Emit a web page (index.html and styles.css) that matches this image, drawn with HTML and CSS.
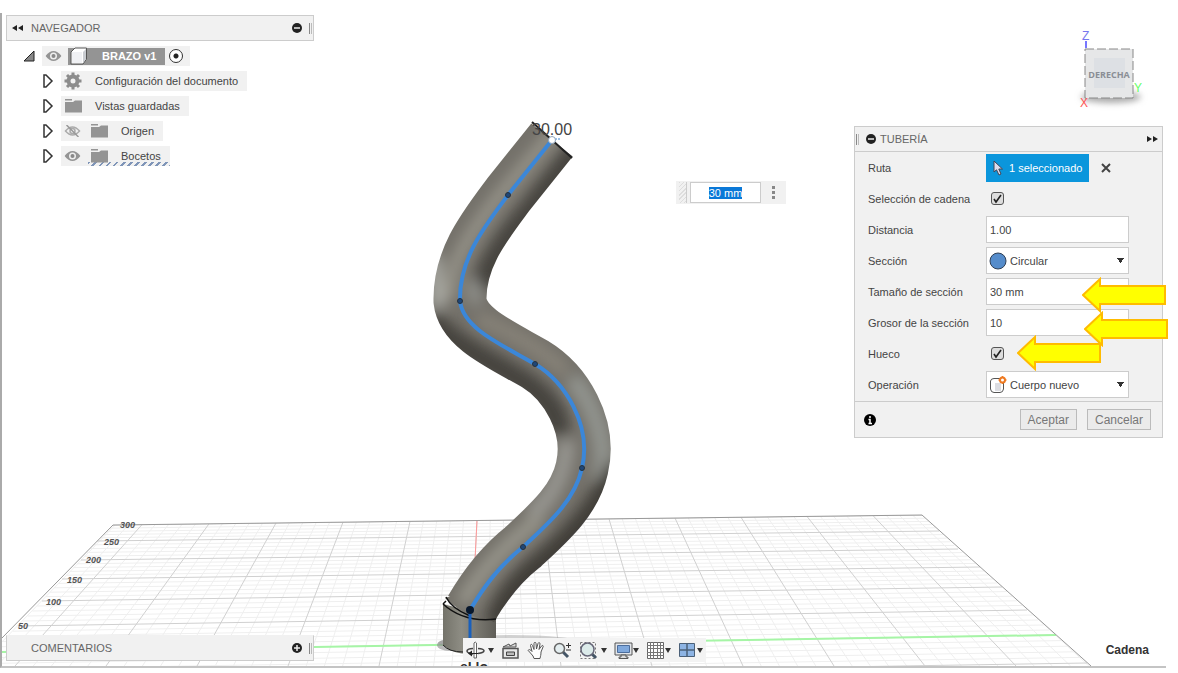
FILE: index.html
```html
<!DOCTYPE html>
<html lang="es">
<head>
  <meta charset="UTF-8">
  <meta name="viewport" content="width=device-width, initial-scale=1.0">
  <title>BRAZO v1</title>
  <link rel="stylesheet" href="styles.css">
</head>
<body>

<svg class="scene" viewBox="0 0 1178 673" preserveAspectRatio="xMidYMid slice" aria-hidden="true">
  <defs>
    <clipPath id="floor-clip"><path d="M113 525 L922 515 L1091 666 L2 666 L2 638 Z"/></clipPath>
    <clipPath id="view-clip"><path d="M2 13 H1166 V666 H2 Z"/></clipPath>
    <mask id="tube-mask" maskUnits="userSpaceOnUse" x="400" y="100" width="240" height="570">
      <path d="M552 140 L508 195 C485 226 459 258 460 301 C463 328 500 344 535 364 C565 382 592 425 582 468 C575 500 550 522 523 547 C500 565 485 585 471 609" fill="none" stroke="#fff" stroke-width="53"/>
      <path d="M445 598 L470 590 L500 600 L496 620 Q468 620 445 598 Z" fill="#fff"/>
    </mask>
    <filter id="soft" filterUnits="userSpaceOnUse" x="380" y="80" width="280" height="600"><feGaussianBlur stdDeviation="7"/></filter>
    <linearGradient id="base-fill" x1="0" x2="1" y1="0" y2="0">
      <stop offset="0" stop-color="#74736a"/>
      <stop offset="0.35" stop-color="#8e8d84"/>
      <stop offset="1" stop-color="#5f5d57"/>
    </linearGradient>
  </defs>

  <!-- suelo -->
  <g clip-path="url(#floor-clip)">
    <g id="floor-grid"></g>
    <path d="M477 520 L471 640" stroke="#f99" fill="none"/>
    <path d="M0 652 L1056 635" stroke="#a6f5a6" stroke-width="2" fill="none"/>
  </g>
  <path d="M2 638 L113 525 L922 515 L1091 666" fill="none" stroke="#999" stroke-width="1"/>
  <g class="floor-text">
    <text x="120" y="528">300</text>
    <text x="104" y="545">250</text>
    <text x="86" y="563">200</text>
    <text x="67" y="583">150</text>
    <text x="46" y="605">100</text>
    <text x="18" y="629">50</text>
  </g>

  <!-- base -->
  <ellipse cx="510" cy="643" rx="72" ry="8" fill="#999" opacity="0.45"/>
  <ellipse cx="450" cy="645" rx="13" ry="6" fill="#888" opacity="0.6"/>
  <path d="M443 604 L443 645 Q452 654 470 654 L496 650 L496 618 Z" fill="url(#base-fill)"/>
  <path d="M443 645 Q449 652 463 652" fill="none" stroke="#222"/>

  <!-- tubería -->
  <g mask="url(#tube-mask)">
    <rect x="400" y="100" width="240" height="570" fill="#74716a"/>
    <g filter="url(#soft)" fill="none">
      <path d="M582 145 L530 212 C506 240 488 268 484 288" stroke="#45433d" stroke-width="24"/>
      <path d="M556 130 L500 195 C476 226 448 262 449 300" stroke="#98958b" stroke-width="12"/>
      <path d="M434 255 L438 308" stroke="#aaaba5" stroke-width="13"/>
      <path d="M472 280 L476 304" stroke="#92938e" stroke-width="12"/>
      <path d="M428 318 C456 350 500 366 528 386 C552 404 560 420 556 434" stroke="#45433d" stroke-width="24"/>
      <path d="M478 318 C512 332 546 352 566 372" stroke="#8a857a" stroke-width="12"/>
      <path d="M572 378 C602 416 607 455 600 480" stroke="#92948f" stroke-width="18"/>
      <path d="M567 440 C566 475 548 502 530 516" stroke="#989792" stroke-width="16"/>
      <path d="M620 466 C594 520 558 550 538 567 C518 584 503 602 496 626" stroke="#403e37" stroke-width="25"/>
      <path d="M540 518 C508 543 480 570 462 604" stroke="#98968c" stroke-width="14"/>
    </g>
  </g>
  <path d="M532 122 L572 158" stroke="#222" stroke-width="2"/>
  <path d="M446 597 Q451 608 470 616 M443 604 Q464 623 496 619 M443 604 L446 601" fill="none" stroke="#111" stroke-width="1.5"/>
  <text class="dim-text" x="532" y="135">30.00</text>
  <path d="M552 140 L508 195 C485 226 459 258 460 301 C463 328 500 344 535 364 C565 382 592 425 582 468 C575 500 550 522 523 547 C500 565 485 585 470 610" fill="none" stroke="#3b87d9" stroke-width="4"/>
  <path d="M470 610 V640" stroke="#1960bd" stroke-width="3"/>
  <g fill="#1f4778" stroke="#26313d">
    <circle cx="508" cy="195" r="2.5"/>
    <circle cx="460" cy="301" r="2.5"/>
    <circle cx="535" cy="364" r="2.5"/>
    <circle cx="582" cy="468" r="2.5"/>
    <circle cx="523" cy="547" r="2.5"/>
  </g>
  <circle cx="470" cy="610" r="4" fill="#07172c"/>
  <path d="M555 139 H561" stroke="#3b87d9" stroke-dasharray="2 1"/>
  <circle cx="552" cy="140" r="3.5" fill="#fff" stroke="#8fa3b8"/>
  <g clip-path="url(#view-clip)"><text class="cut-text" x="460" y="672">el lo</text></g>
</svg>

<main class="viewport">

  <aside class="left">
    <section class="panel-bar">
      <button class="plain" aria-label="Contraer"><svg width="11" height="8" viewBox="0 0 11 8"><path d="M5 1 V7 L0 4 Z M11 1 V7 L6 4 Z" fill="#222"/></svg></button>
      <h2>NAVEGADOR</h2>
      <button class="plain" aria-label="Ocultar"><svg width="10" height="10" viewBox="0 0 10 10"><circle cx="5" cy="5" r="5" fill="#222"/><path d="M2 5 H8" stroke="#eee" stroke-width="1.5"/></svg></button>
      <span class="grip"></span>
    </section>

    <ul class="tree">
      <li class="root">
        <button class="plain toggle" aria-label="Contraer BRAZO v1"><svg width="12" height="12" viewBox="0 0 12 12"><path d="M11 1 V11 H1 Z" fill="#888" stroke="#222"/></svg></button>
        <div class="node">
          <svg class="eye" viewBox="0 0 16 12"><use href="#eye"/></svg>
          <span class="active">
            <svg width="18" height="18" viewBox="0 0 18 18"><path d="M1 5 L5 1 H16.5 V12 L13 17 H1 Z" fill="#fff" stroke="#555"/><path d="M13 5 L16 2 V12 L13 16 Z" fill="#c9ccd1"/><path d="M2 5 H12 V16 H2 Z" fill="#f0f1f4"/></svg>
            <b>BRAZO v1</b>
          </span>
          <input type="radio" checked aria-label="Activar BRAZO v1">
        </div>
      </li>
      <li>
        <button class="plain toggle" aria-label="Expandir"><svg width="12" height="14" viewBox="0 0 12 14"><use href="#tri"/></svg></button>
        <div class="node">
          <svg class="icon" viewBox="0 0 18 18"><circle cx="9" cy="9" r="4.5" fill="none" stroke="#8c8c8c" stroke-width="4"/><path d="M9 0.5 V4 M9 14 V17.5 M0.5 9 H4 M14 9 H17.5 M3 3 L5.5 5.5 M12.5 12.5 L15 15 M15 3 L12.5 5.5 M5.5 12.5 L3 15" stroke="#8c8c8c" stroke-width="3"/></svg>
          <span class="name">Configuración del documento</span>
        </div>
      </li>
      <li>
        <button class="plain toggle" aria-label="Expandir"><svg width="12" height="14" viewBox="0 0 12 14"><use href="#tri"/></svg></button>
        <div class="node">
          <svg class="icon" viewBox="0 0 18 18"><use href="#folder"/></svg>
          <span class="name">Vistas guardadas</span>
        </div>
      </li>
      <li>
        <button class="plain toggle" aria-label="Expandir"><svg width="12" height="14" viewBox="0 0 12 14"><use href="#tri"/></svg></button>
        <div class="node">
          <svg class="eye" viewBox="0 0 16 12"><path d="M1 6 Q8 -2 15 6 Q8 14 1 6 Z" fill="none" stroke="#aaa" stroke-width="1.5"/><circle cx="8" cy="6" r="2.5" fill="none" stroke="#aaa" stroke-width="1.5"/><path d="M2 0 L14 12" stroke="#999" stroke-width="1.5"/></svg>
          <svg class="icon second" viewBox="0 0 18 18"><use href="#folder"/></svg>
          <span class="name">Origen</span>
        </div>
      </li>
      <li>
        <button class="plain toggle" aria-label="Expandir"><svg width="12" height="14" viewBox="0 0 12 14"><use href="#tri"/></svg></button>
        <div class="node">
          <svg class="eye" viewBox="0 0 16 12"><use href="#eye"/></svg>
          <span class="hatched">
            <svg class="icon" viewBox="0 0 18 18"><use href="#folder"/></svg>
            <span class="name">Bocetos</span>
          </span>
        </div>
      </li>
    </ul>

    <section class="panel-bar comments">
      <h2>COMENTARIOS</h2>
      <button class="plain" aria-label="Mostrar"><svg width="10" height="10" viewBox="0 0 10 10"><circle cx="5" cy="5" r="5" fill="#222"/><path d="M2 5 H8 M5 2 V8" stroke="#eee" stroke-width="1.5"/></svg></button>
      <span class="grip"></span>
    </section>
  </aside>

  <nav class="toolbar" aria-label="Navegación">
    <div class="tool spaced">
      <button class="plain" aria-label="Órbita"><svg width="19" height="19" viewBox="0 0 19 19"><path d="M8 2 V17 H10.5 V2 L9.2 1 Z" fill="#fff" stroke="#666"/><path d="M7 13 C-1 12 -1 8 7 7.5 M12 7.5 C20 8 20 11.5 12 12.5" fill="none" stroke="#444" stroke-width="1.5"/><path d="M3 12.5 H12" stroke="#222"/><path d="M6 9.5 L2 12.5 L6 15.5 Z" fill="#222"/></svg></button>
      <button class="plain caret" aria-label="Más opciones de órbita"></button>
    </div>
    <button class="plain" aria-label="Mirar a"><svg width="19" height="19" viewBox="0 0 19 19"><path d="M2 7.5 H17 V17 H2 Z" fill="#e8e8e8" stroke="#555" stroke-width="1.5"/><path d="M5.5 11 H13.5 V14.5 H5.5 Z" fill="#bbb" stroke="#444"/><path d="M2 6 L8 3 L9 5 L15 2 L15 6 Z" fill="#ddd" stroke="#555"/></svg></button>
    <button class="plain" aria-label="Encuadre"><svg width="19" height="19" viewBox="0 0 19 19"><path d="M7 17.5 L6 15 C4 13 3 11 1.2 9.5 C1.5 8 3.5 8.5 5 10.5 L3.5 4.5 C3.5 3 5 3 5.5 4.5 L7 8.5 L7 2.5 C7 1 9 1 9 2.5 L9.5 8 L11 2.5 C11.5 1 13.2 1.5 13 3 L12 8.5 L14.5 5 C15.5 3.8 16.8 4.8 16 6 L14 11 C14 14 13.5 15 13 17.5 Z" fill="#fff" stroke="#555"/></svg></button>
    <button class="plain" aria-label="Zoom"><svg width="19" height="19" viewBox="0 0 19 19"><path d="M9.5 10.5 L15 16" stroke="#456" stroke-width="3"/><circle cx="6.5" cy="7.5" r="5" fill="#e4eef0" stroke="#666" stroke-width="1.5"/><path d="M13 4.5 H18 M15.5 2 V7 M13 9 H18" stroke="#333"/></svg></button>
    <div class="tool spaced">
      <button class="plain" aria-label="Ventana de zoom"><svg width="19" height="19" viewBox="0 0 19 19"><path d="M1.5 1.5 H16.5 V17.5 H1.5 Z" fill="none" stroke="#777" stroke-dasharray="2 2"/><path d="M12 12 L17 17" stroke="#456" stroke-width="3"/><circle cx="8.5" cy="8.5" r="6.5" fill="#dcebea" stroke="#667" stroke-width="1.5"/></svg></button>
      <button class="plain caret" aria-label="Más opciones de zoom"></button>
    </div>
    <div class="tool">
      <button class="plain" aria-label="Visualización"><svg width="19" height="19" viewBox="0 0 19 19"><path d="M1 2 H18 V14 H1 Z" fill="#e3e6ea" stroke="#555"/><path d="M3.5 4.5 H15.5 V11.5 H3.5 Z" fill="#7fa8dc" stroke="#4c6d9c"/><path d="M7 14 H12 V16 H14 V17.5 H5 V16 H7 Z" fill="#ddd" stroke="#555"/></svg></button>
      <button class="plain caret" aria-label="Más opciones de visualización"></button>
    </div>
    <div class="tool">
      <button class="plain" aria-label="Rejilla"><svg width="19" height="19" viewBox="0 0 19 19"><path d="M1.5 1.5 H17.5 V17.5 H1.5 Z" fill="#fff" stroke="#666"/><path d="M4.5 1 V18 M7.5 1 V18 M11.5 1 V18 M14.5 1 V18 M1 4.5 H18 M1 7.5 H18 M1 11.5 H18 M1 14.5 H18" stroke="#777"/></svg></button>
      <button class="plain caret" aria-label="Más opciones de rejilla"></button>
    </div>
    <div class="tool">
      <button class="plain" aria-label="Ventanas gráficas"><svg width="19" height="19" viewBox="0 0 19 19"><path d="M1.5 2.5 H9 V9 H1.5 Z M9 2.5 H16.500 V9 H9 Z M1.5 9 H9 V15.500 H1.5 Z M9 9 H16.500 V15.500 H9 Z" fill="#8db4e4" stroke="#4b6078"/></svg></button>
      <button class="plain caret" aria-label="Más ventanas gráficas"></button>
    </div>
  </nav>

  <aside class="right">
    <svg class="cube" width="80" height="84" viewBox="0 0 80 84">
      <defs><filter id="cube-shadow" x="-20%" y="-100%" width="140%" height="300%"><feGaussianBlur stdDeviation="3"/></filter></defs>
      <ellipse cx="41" cy="69" rx="30" ry="6" fill="#aaa" filter="url(#cube-shadow)"/>
      <path d="M15 21 H63 V70 H15 Z" fill="#e6e7e8"/>
      <path d="M24 30 H55 V60 H24 Z" fill="#dde0e4"/>
      <path d="M15 21 H63 V70 H15 Z" fill="none" stroke="#888" stroke-dasharray="9 3"/>
      <path d="M16 13 V20" stroke="#77f" stroke-width="2"/>
      <text class="axis" x="12" y="12" fill="#77e">Z</text>
      <text class="axis" x="64" y="64" fill="#6f6">Y</text>
      <text class="axis" x="10" y="79" fill="#f55">X</text>
      <text class="face" x="39" y="50" text-anchor="middle">DERECHA</text>
    </svg>

    <form class="dialog">
      <header>
        <span class="grip"></span>
        <button type="button" class="plain" aria-label="Contraer"><svg width="10" height="10" viewBox="0 0 10 10"><circle cx="5" cy="5" r="5" fill="#222"/><path d="M2 5 H8" stroke="#eee" stroke-width="1.5"/></svg></button>
        <h2>TUBERÍA</h2>
        <button type="button" class="plain" aria-label="Acoplar"><svg width="11" height="8" viewBox="0 0 11 8"><path d="M0 1 V7 L5 4 Z M6 1 V7 L11 4 Z" fill="#222"/></svg></button>
      </header>
      <div class="fields">
        <div class="row">
          <label for="ruta">Ruta</label>
          <div class="control">
            <button type="button" class="pick" id="ruta"><svg width="11" height="16" viewBox="0 0 11 16"><path d="M1 1 V12 L3.5 9.8 L6 15 L8 14 L5.8 9 H9.5 Z" fill="#dde" stroke="#445"/></svg>1 seleccionado</button>
            <button type="button" class="plain" aria-label="Borrar selección"><svg width="10" height="10" viewBox="0 0 10 10"><path d="M1 1 L9 9 M9 1 L1 9" stroke="#444" stroke-width="2"/></svg></button>
          </div>
        </div>
        <div class="row">
          <label for="cadena">Selección de cadena</label>
          <div class="control"><input type="checkbox" id="cadena" checked></div>
        </div>
        <div class="row">
          <label for="distancia">Distancia</label>
          <div class="control"><input type="text" id="distancia" value="1.00"></div>
        </div>
        <div class="row">
          <label for="seccion">Sección</label>
          <div class="control">
            <select id="seccion"><option>Circular</option></select>
            <svg class="lead" width="18" height="18" viewBox="0 0 18 18"><circle cx="9" cy="9" r="8" fill="#558ccb" stroke="#2f3f55"/></svg>
          </div>
        </div>
        <div class="row">
          <label for="tamano">Tamaño de sección</label>
          <div class="control">
            <input type="text" id="tamano" value="30 mm">
            <svg class="arrow size" viewBox="0 0 84 36"><use href="#arrow"/></svg>
          </div>
        </div>
        <div class="row">
          <label for="grosor">Grosor de la sección</label>
          <div class="control">
            <input type="text" id="grosor" value="10">
            <svg class="arrow thick" viewBox="0 0 84 36"><use href="#arrow"/></svg>
          </div>
        </div>
        <div class="row">
          <label for="hueco">Hueco</label>
          <div class="control">
            <input type="checkbox" id="hueco" checked>
            <svg class="arrow hollow" viewBox="0 0 84 36"><use href="#arrow"/></svg>
          </div>
        </div>
        <div class="row">
          <label for="operacion">Operación</label>
          <div class="control">
            <select id="operacion"><option>Cuerpo nuevo</option></select>
            <svg class="lead" width="18" height="18" viewBox="0 0 18 18"><path d="M1.5 5 Q2 2.5 5 2.5 H11 Q14 3 14.5 6 V13 Q14 16.5 11 16.5 H5 Q2 16.5 1.5 13 Z" fill="#fff" stroke="#555"/><path d="M6 7 H12 V15 H6 Z" fill="#dcdde2"/><circle cx="13.5" cy="4" r="2.5" fill="#fff" stroke="#ee7a22" stroke-width="2"/><path d="M13.5 0 V1.5 M13.5 6.5 V8 M9.5 4 H11 M16 4 H17.5" stroke="#ee7a22" stroke-width="1.5"/></svg>
          </div>
        </div>
      </div>
      <footer>
        <svg class="info" width="12" height="12" viewBox="0 0 12 12"><circle cx="6" cy="6" r="6" fill="#000"/><path d="M6 2 V4 M4.5 5.5 H6 V9.5 M4.5 9.5 H8" stroke="#fff" stroke-width="1.5" fill="none"/></svg>
        <button type="button" class="btn">Aceptar</button>
        <button type="button" class="btn">Cancelar</button>
      </footer>
    </form>

    <p class="status">Cadena</p>
  </aside>

  <div class="hud">
    <span class="hud-grip"></span>
    <input type="text" id="hud-size" value="30 mm" aria-label="Tamaño de sección">
    <button class="plain" aria-label="Más"><svg width="4" height="14" viewBox="0 0 4 14"><path d="M0 0 H3 V3 H0 Z M0 5 H3 V8 H0 Z M0 10 H3 V13 H0 Z" fill="#888"/></svg></button>
  </div>
</main>

<svg class="symbols" aria-hidden="true">
  <symbol id="eye" viewBox="0 0 16 12"><path d="M0 6 Q8 -4 16 6 Q8 16 0 6 Z" fill="#949494"/><circle cx="8" cy="6" r="3.5" fill="#eee"/><circle cx="8" cy="6" r="2" fill="#888"/></symbol>
  <symbol id="folder" viewBox="0 0 18 18"><path d="M1 2 H8 V3.5 H1 Z M1 5 H9 L11 3.5 H18 V15.5 H1 Z" fill="#949494"/></symbol>
  <symbol id="tri" viewBox="0 0 12 14"><path d="M2 1 H4 L10 7 L4 13 H2 Z" fill="#fff" stroke="#333" stroke-width="1.5"/></symbol>
  <symbol id="arrow" viewBox="0 0 84 36"><path d="M1 18 L18 2 V9 H83 V27 H18 V34 Z" fill="#ff0" stroke="#fb0" stroke-width="2"/></symbol>
</svg>

<script src="script.js"></script>
</body>
</html>
```

FILE: styles.css
```css
* {
  box-sizing: border-box;
}

body {
  margin: 0;
  padding: 13px 12px 5px 0;
  height: 100vh;
  overflow: hidden;
  position: relative;
  background-color: white;
  color: #444;
  font-family: "Liberation Sans", Arial, sans-serif;
  font-size: 11px;
}

h2 {
  margin: 0;
  font-size: 11px;
  font-weight: normal;
  color: #666;
}

input,
select,
button {
  font-family: inherit;
  font-size: 11px;
  color: #444;
}

.plain {
  display: flex;
  padding: 0;
  border: none;
  background: none;
}

.symbols {
  display: none;
}

/* escena 3D de fondo */
.scene {
  position: absolute;
  inset: 0;
  width: 100%;
  height: 100%;
}

.grid-minor {
  stroke: #efefef;
}

.grid-major {
  stroke: #d0d0d0;
}

.floor-text {
  font-size: 9px;
  font-style: italic;
  font-weight: bold;
  fill: #555;
}

.dim-text {
  font-size: 16px;
  fill: #444;
}

.cut-text {
  font-size: 14px;
  font-weight: bold;
  fill: #333;
}

.viewport {
  position: relative;
  display: flex;
  justify-content: space-between;
  height: 100%;
  border-left: 2px solid #aaa;
  border-bottom: 2px solid #c4c4c4;
}

.left,
.right {
  flex: 1;
  display: flex;
  flex-direction: column;
}

/* navegador */
.left {
  align-items: flex-start;
  padding: 2px 0 5px 4px;
}

.panel-bar {
  display: flex;
  align-items: center;
  width: 308px;
  height: 26px;
  padding: 0 1px 0 5px;
  background-color: #f1f1f1;
  border: 1px solid #ccc;
}

.panel-bar h2 {
  flex: 1;
  margin-left: 8px;
}

.panel-bar .grip {
  margin-left: 7px;
}

.comments {
  margin-top: auto;
  border-top-color: #f1f1f1;
}

.comments h2 {
  margin-left: 19px;
}

.grip {
  width: 3px;
  height: 11px;
  border-left: 1px solid #888;
  border-right: 1px solid #bbb;
}

.tree {
  list-style: none;
  margin: 5px 0 0;
  padding: 0 0 0 36px;
  display: flex;
  flex-direction: column;
  gap: 5px;
}

.tree li {
  display: flex;
  align-items: center;
}

.tree .root {
  margin-left: -19px;
}

.toggle {
  width: 19px;
}

.node {
  display: flex;
  align-items: center;
  height: 20px;
  padding: 0 9px 0 3px;
  background-color: #f1f1f1;
}

.root .node {
  padding-right: 7px;
}

.eye {
  width: 17px;
  height: 12px;
}

.icon {
  width: 18px;
  height: 18px;
}

.name {
  margin-left: 13px;
}

.second {
  margin-left: 9px;
}

.active {
  display: flex;
  align-items: center;
  gap: 14px;
  height: 17px;
  margin: 0 4px 0 6px;
  padding: 0 9px 0 2px;
  background-color: #949494;
  color: white;
}

.hatched {
  display: flex;
  align-items: center;
  height: 20px;
  margin: 0 -9px 0 7px;
  padding: 0 9px 0 2px;
  background: repeating-linear-gradient(135deg, #7f95b8 0 2px, transparent 2px 5px) bottom / 100% 4px no-repeat;
}

input[type="radio"] {
  appearance: none;
  width: 14px;
  height: 14px;
  margin: 0;
  border: 1px solid #333;
  border-radius: 50%;
  background: radial-gradient(circle, #222 0 2px, white 3px);
}

/* barra inferior */
.toolbar {
  align-self: flex-end;
  display: flex;
  align-items: center;
  gap: 7px;
  height: 24px;
  margin-bottom: 4px;
  padding: 0 3px;
  background-color: #f3f3f3;
}

.tool {
  display: flex;
  align-items: center;
}

.spaced {
  gap: 3px;
}

.caret {
  border-left: 3px solid transparent;
  border-right: 3px solid transparent;
  border-top: 5px solid #333;
}

/* cubo, diálogo y estado */
.right {
  align-items: flex-end;
  padding: 15px 3px 9px 0;
}

.cube {
  margin-right: 13px;
}

.axis {
  font-size: 12px;
}

.face {
  font-family: "Open Sans", sans-serif;
  font-size: 9px;
  font-weight: bold;
  fill: #8a8e95;
}

.dialog {
  width: 309px;
  margin-top: 14px;
  background-color: #f1f1f1;
  border: 1px solid #ccc;
}

.dialog header {
  display: flex;
  align-items: center;
  height: 25px;
  padding: 0 4px 0 1px;
  border-bottom: 1px solid #ccc;
}

.dialog header .grip {
  margin-right: 7px;
}

.dialog h2 {
  flex: 1;
  margin-left: 4px;
}

.fields {
  padding: 0 0 1px 13px;
}

.row {
  display: flex;
  align-items: center;
  height: 31px;
}

.row label {
  width: 118px;
}

.control {
  position: relative;
  display: flex;
  align-items: center;
  width: 143px;
}

.control input[type="text"],
select {
  width: 100%;
  height: 27px;
  padding: 0 3px;
  border: 1px solid #ccc;
  border-radius: 0;
  background-color: white;
}

.control select {
  appearance: none;
  padding-left: 23px;
  background: conic-gradient(from 325deg at 50% 100%, #333 70deg, transparent 70deg) right 4px center / 7px 5px no-repeat white;
}

.lead {
  position: absolute;
  left: 3px;
}

input[type="checkbox"] {
  appearance: none;
  width: 13px;
  height: 13px;
  margin: 0 0 0 5px;
  border: 1px solid #555;
  border-radius: 3px;
  background: url("data:image/svg+xml,%3Csvg xmlns='http://www.w3.org/2000/svg' viewBox='0 0 11 11'%3E%3Cpath d='M2 6 L4 9 L9 2' fill='none' stroke='%23222' stroke-width='1.6'/%3E%3C/svg%3E") #ddd;
}

.pick {
  display: flex;
  align-items: center;
  gap: 5px;
  height: 28px;
  margin-right: 12px;
  padding: 0 7px;
  border: none;
  background-color: #0b96dc;
  color: white;
  white-space: nowrap;
}

.arrow {
  position: absolute;
  z-index: 1;
  width: 84px;
  height: 36px;
}

.size {
  left: 96px;
  top: -1px;
}

.thick {
  left: 98px;
  top: 2px;
}

.hollow {
  left: 31px;
  top: -12px;
}

.dialog footer {
  display: flex;
  align-items: center;
  gap: 10px;
  height: 36px;
  padding: 0 11px 0 9px;
  border-top: 1px solid #ccc;
}

.info {
  margin-right: auto;
}

.btn {
  height: 21px;
  padding: 0 7px;
  border: 1px solid #bbb;
  background-color: #ebebeb;
  color: #777;
  font-size: 12px;
}

.status {
  margin: auto 14px 0 0;
  font-size: 12px;
  font-weight: bold;
  color: #333;
}

/* entrada flotante sobre el lienzo */
.hud {
  position: absolute;
  left: 674px;
  top: 168px;
  display: flex;
  align-items: center;
  width: 110px;
  height: 23px;
  padding: 0 3px;
  background-color: #f1f1f1;
}

.hud-grip {
  width: 8px;
  height: 21px;
  border-right: 1px solid #ccc;
  background: repeating-linear-gradient(135deg, #ddd 0 1px, transparent 1px 3px);
}

.hud input {
  width: 71px;
  height: 21px;
  margin: 0 11px 0 3px;
  padding: 0;
  border: 1px solid #ccc;
  outline: none;
  text-align: center;
}

.hud input::selection {
  background-color: #0a78d7;
  color: white;
}
```

FILE: script.js
```js
const SVG = "http://www.w3.org/2000/svg";
const grid = document.getElementById("floor-grid");

function addLine(x1, y1, x2, y2, major) {
  const line = document.createElementNS(SVG, "line");
  line.setAttribute("x1", x1);
  line.setAttribute("y1", y1);
  line.setAttribute("x2", x2);
  line.setAttribute("y2", y2);
  line.setAttribute("class", major ? "grid-major" : "grid-minor");
  grid.appendChild(line);
}

// filas: [x izquierda, y izquierda, x derecha, y derecha]
const rows = [
  [113, 525, 922, 515],
  [97, 541, 939, 531],
  [81, 560, 958, 549],
  [62, 579, 980, 567],
  [42, 601, 1002, 587],
  [18, 626, 1027, 610],
  [-8, 652, 1055, 635],
  [-36, 681, 1087, 663]
];

function drawRows(major) {
  for (let i = 0; i < rows.length - 1; i++) {
    for (let j = 0; j < 5; j++) {
      if ((j === 0) !== major) continue;
      const p = rows[i].map((v, n) => v + (rows[i + 1][n] - v) * j / 5);
      addLine(p[0], p[1], p[2], p[3], major);
    }
  }
}

// columnas, 5 divisiones por cada línea principal
function drawColumns(major) {
  for (let k = -27; k <= 34; k++) {
    if ((k % 5 === 0) !== major) continue;
    const top = 477 + k / 5 * (k < 0 ? 67 : 66);
    addLine(top, 525 - (top - 113) / 81, 470 + k / 5 * 91, 666, major);
  }
}

drawRows(false);
drawColumns(false);
drawRows(true);
drawColumns(true);
addLine(-36, 681, 1087, 663, true);

const hudInput = document.getElementById("hud-size");
hudInput.focus();
hudInput.select();
```
